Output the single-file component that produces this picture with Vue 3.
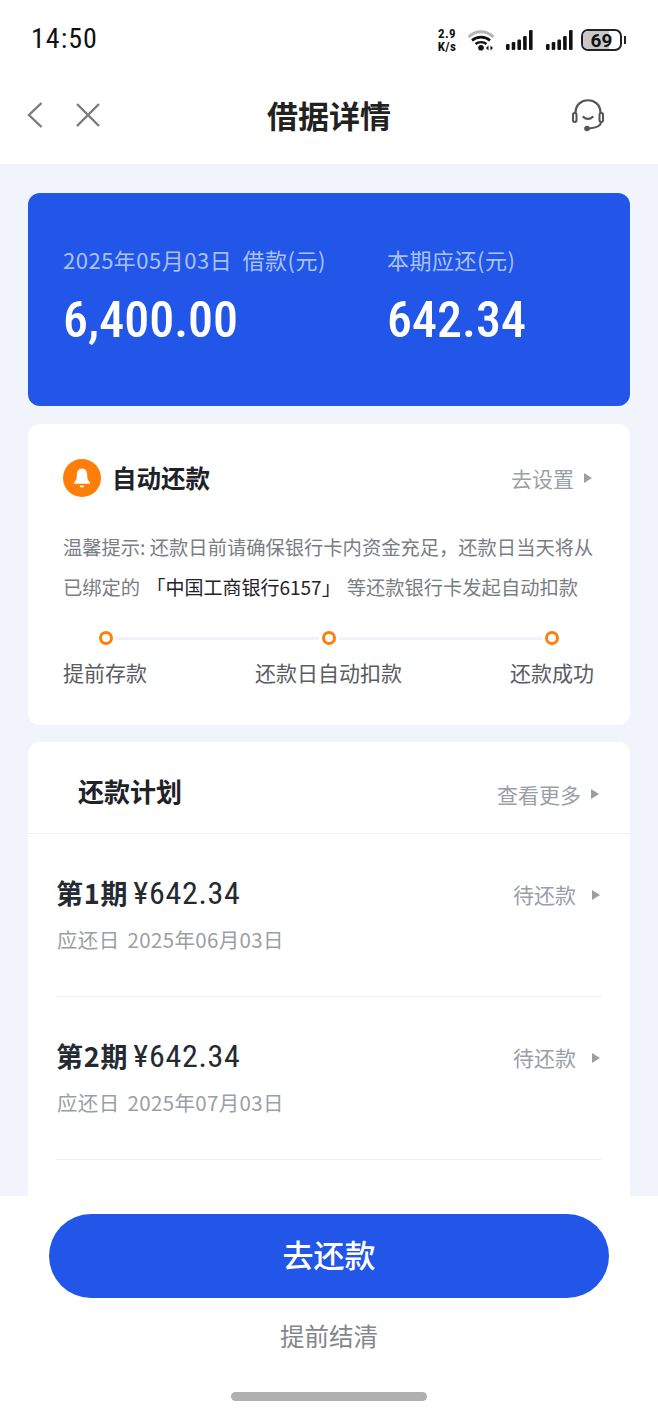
<script setup>
const plans = [
  { title: '第1期', amount: '¥642.34', date: '应还日 2025年06月03日' },
  { title: '第2期', amount: '¥642.34', date: '应还日 2025年07月03日' },
]
const steps = ['提前存款', '还款日自动扣款', '还款成功']
const bars = [[0, 6], [5.7, 8], [11.4, 10.5], [17.1, 14], [23, 20]]
</script>

<template>
  <div class="page">
    <header class="top">
      <div class="status">
        <span class="time">14:50</span>
        <div class="status-right">
          <span class="speed">2.9<br />K/s</span>
          <svg class="wifi" width="28" height="22" viewBox="0 0 28 22" fill="none">
            <path d="M1.500 8C8.500 1 19.500 1 26.500 8" stroke="#b5b5b5" stroke-width="2.800" />
            <path d="M5 11.500C10 7 18 7 23 11.500" stroke="#111" stroke-width="2.600" />
            <path d="M8.500 15C11.500 12.500 16.500 12.500 19.500 15" stroke="#111" stroke-width="2.400" />
            <circle cx="14" cy="18.800" r="2.800" fill="#111" />
            <path d="M21.500 16.500v5l-2.500-2.500zM23.500 16.500v5l2.500-2.500z" fill="#111" />
          </svg>
          <svg v-for="n in 2" :key="n" class="signal" width="27" height="20" viewBox="0 0 27 20">
            <rect v-for="b in bars" :key="b[0]" :x="b[0]" :y="20 - b[1]" width="3.600" :height="b[1]" rx="1.200" fill="#111" />
          </svg>
          <div class="battery">
            <div class="battery-body"><span class="battery-fill"></span><span class="battery-num">69</span></div>
            <span class="battery-cap"></span>
          </div>
        </div>
      </div>
      <nav class="nav">
        <div class="nav-left">
          <svg width="18" height="28" viewBox="0 0 18 28" fill="none"><path d="M16.500 2 4 14 16.500 26" stroke="#7a7a7a" stroke-width="2.400" /></svg>
          <svg width="26" height="26" viewBox="0 0 26 26" fill="none"><path d="M2 2 24 24M24 2 2 24" stroke="#7a7a7a" stroke-width="2.400" /></svg>
        </div>
        <h1 class="nav-title">借据详情</h1>
        <svg class="service" width="34" height="33" viewBox="0 0 34 33" fill="none">
          <path d="M4.500 14C4.500 -3 29.500 -3 29.500 14" stroke="#555" stroke-width="2.200" />
          <rect x="2" y="14" width="3.500" height="9" rx="1.750" stroke="#555" stroke-width="2" />
          <rect x="28.500" y="14" width="3.500" height="9" rx="1.750" stroke="#555" stroke-width="2" />
          <path d="M12.500 18C15 20.500 19 20.500 21.500 18" stroke="#555" stroke-width="2.400" stroke-linecap="round" />
          <path d="M30 23C30 27 24 29 18 29.500" stroke="#555" stroke-width="2" />
          <circle cx="16" cy="29.500" r="2.800" fill="#555" />
        </svg>
      </nav>
    </header>

    <main class="main">
      <section class="loan">
        <div class="loan-col loan-first">
          <p class="loan-label">2025年05月03日 借款(元)</p>
          <p class="loan-value">6,400.00</p>
        </div>
        <div class="loan-col">
          <p class="loan-label">本期应还(元)</p>
          <p class="loan-value">642.34</p>
        </div>
      </section>

      <section class="card auto">
        <div class="auto-head">
          <span class="bell">
            <svg width="22" height="24" viewBox="0 0 22 24"><path d="M11 2.500C7.300 2.500 5.800 5.500 5.800 9.500c0 3.200-.8 5-2.800 7-.5.600-.2 1.300.6 1.300h14.800c.8 0 1.100-.7.6-1.300-2-2-2.800-3.800-2.800-7 0-4-1.500-7-5.200-7Z" fill="#fff" /><rect x="9" y="19.500" width="4" height="1.800" rx=".9" fill="#fff" /></svg>
          </span>
          <h2 class="auto-title">自动还款</h2>
          <span class="more">去设置<i class="tri"></i></span>
        </div>
        <p class="tip">温馨提示: 还款日前请确保银行卡内资金充足，还款日当天将从</p>
        <p class="tip">已绑定的 <span class="bank">「中国工商银行6157」</span>等还款银行卡发起自动扣款</p>
        <div class="track">
          <span class="dot"></span><span class="line"></span><span class="dot"></span><span class="line"></span><span class="dot"></span>
        </div>
        <div class="steps"><span v-for="s in steps" :key="s">{{ s }}</span></div>
      </section>

      <section class="card plan">
        <div class="plan-head">
          <h2 class="plan-title">还款计划</h2>
          <span class="more plan-more">查看更多<i class="tri"></i></span>
        </div>
        <div class="plan-list">
          <div v-for="p in plans" :key="p.title" class="plan-row">
            <div class="row-top">
              <span class="row-title"><b>{{ p.title }}</b><span class="row-amount">{{ p.amount }}</span></span>
              <span class="more row-state">待还款<i class="tri"></i></span>
            </div>
            <p class="row-date">{{ p.date }}</p>
          </div>
        </div>
      </section>
    </main>

    <footer class="foot">
      <button class="pay">去还款</button>
      <span class="settle">提前结清</span>
      <span class="home"></span>
    </footer>
  </div>
</template>

<style scoped>
* { box-sizing: border-box; }
p, h1, h2 { margin: 0; font-weight: inherit; }
.page {
  width: 658px; height: 1416px; display: flex; flex-direction: column; overflow: hidden;
  background: #f1f4fa; color: #1f2329;
  font-family: "Noto Sans CJK SC", "Noto Sans", sans-serif;
}
.top { height: 165px; background: #fff; border-bottom: 1px solid #f1f2f6; flex: none; }
.status { height: 76px; padding: 20px 32px 0 31px; display: flex; justify-content: space-between; align-items: flex-start; }
.time { font: 400 28px/38px "Roboto", sans-serif; font-stretch: 85%; letter-spacing: 1px; color: #111; }
.status-right { display: flex; align-items: center; height: 38px; margin-top: 1px; }
.speed { font: 700 13px/13px "Roboto", sans-serif; font-stretch: 85%; letter-spacing: .3px; color: #111; text-align: center; width: 22px; margin-right: 9px; }
.wifi { margin-right: 11px; }
.signal { margin-right: 13px; }
.signal + .battery { margin-left: -5px; }
.battery { display: flex; align-items: center; }
.battery-body { position: relative; width: 41px; height: 22px; border: 2px solid #222; border-radius: 7px; overflow: hidden; display: flex; align-items: center; justify-content: center; }
.battery-fill { position: absolute; left: 0; top: 0; bottom: 0; width: 70%; background: #c9c9c9; }
.battery-num { position: relative; font: 700 19px/19px "Roboto", sans-serif; color: #111; }
.battery-cap { width: 2px; height: 8px; margin-left: 2px; background: #222; }
.nav { height: 78px; margin-bottom: 10px; padding: 0 53px 0 25px; position: relative; display: flex; align-items: center; justify-content: space-between; }
.nav-left { display: flex; align-items: center; gap: 32px; }
.nav-title { position: absolute; left: 0; right: 0; text-align: center; font-size: 31px; line-height: 40px; font-weight: 700; color: #222; }
.service { position: relative; }
.main { flex: 1; min-height: 0; overflow: hidden; padding: 28px 28px 0; }
.loan { height: 213px; background: #2256e8; border-radius: 12px; padding: 47px 35px 0; display: flex; color: #fff; }
.loan-first { width: 324px; }
.loan-label { font-size: 22px; line-height: 38px; color: #a9c1f7; letter-spacing: .5px; word-spacing: 5px; white-space: nowrap; }
.loan-value { font: 500 50px/60px "Roboto", "Noto Sans", sans-serif; font-stretch: 85%; margin-top: 12px; white-space: nowrap; }
.card { background: #fff; border-radius: 12px; }
.auto { height: 301px; margin-top: 18px; padding: 35px 36px 0 35px; }
.auto-head { display: flex; align-items: center; height: 38px; }
.bell { width: 38px; height: 38px; border-radius: 50%; background: #ff7d09; display: flex; align-items: center; justify-content: center; margin-right: 11px; }
.auto-title { font-size: 24.500px; font-weight: 700; line-height: 36px; color: #1f2329; }
.more { margin-left: auto; display: flex; align-items: center; font-size: 21px; line-height: 30px; color: #9a9ea6; }
.tri { width: 0; height: 0; margin-left: 10px; border-left: 8px solid #9a9ea6; border-top: 5px solid transparent; border-bottom: 5px solid transparent; }
.auto-head .more { margin-right: 2px; }
.tip { font-size: 19.300px; line-height: 39px; color: #797d84; white-space: nowrap; }
.auto-head + .tip { margin-top: 31px; }
.bank { color: #1f2329; margin-right: 6px; margin-left: 2px; font-size: 19px; }
.track { display: flex; align-items: center; margin-top: 24px; padding: 0 35px 0 36px; }
.dot { width: 14px; height: 14px; flex: none; border: 3px solid #ff7d09; border-radius: 50%; background: #fff; }
.line { flex: 1; height: 3px; background: #f1f2fb; margin: 0 3px; }
.steps { display: flex; justify-content: space-between; margin-top: 11px; font-size: 21px; line-height: 32px; color: #585c63; }
.plan { height: 700px; margin-top: 17px; }
.plan-head { height: 92px; display: flex; align-items: center; padding: 6px 31px 0 50px; border-bottom: 1px solid #eeeff3; }
.plan-title { font-size: 26px; font-weight: 700; color: #1f2329; }
.plan-more { margin-top: 6px; }
.plan-list { padding: 0 28px; }
.plan-row { height: 163px; border-bottom: 1px solid #eeeff3; padding-top: 37px; }
.row-top { display: flex; align-items: center; height: 44px; }
.row-title { display: flex; align-items: center; color: #252a31; }
.row-title b { font-family: "Noto Sans CJK SC", sans-serif; font-size: 27px; letter-spacing: .8px; font-weight: 700; line-height: 44px; }
.row-amount { font: 400 32px/44px "Roboto", sans-serif; font-stretch: 85%; letter-spacing: .7px; margin-left: 5px; }
.row-state { margin-top: 2px; margin-right: 2px; }
.row-state .tri { margin-left: 16px; margin-top: 2px; }
.row-date { margin: 8px 0 0 1px; font-size: 20.500px; line-height: 32px; color: #9a9ea6; letter-spacing: .35px; word-spacing: 3px; }
.foot { flex: none; height: 220px; background: #fff; display: flex; flex-direction: column; align-items: center; position: relative; }
.pay { width: 560px; height: 84px; margin-top: 18px; padding: 0 0 5px; border: 0; border-radius: 42px; background: #2256e8; color: #fff; font: 500 31px/1 "Noto Sans CJK SC", sans-serif; }
.settle { margin-top: 20px; font-size: 24.500px; line-height: 36px; color: #83868b; }
.home { width: 196px; height: 9px; margin-top: 38px; border-radius: 5px; background: #b0b0b0; }
</style>
